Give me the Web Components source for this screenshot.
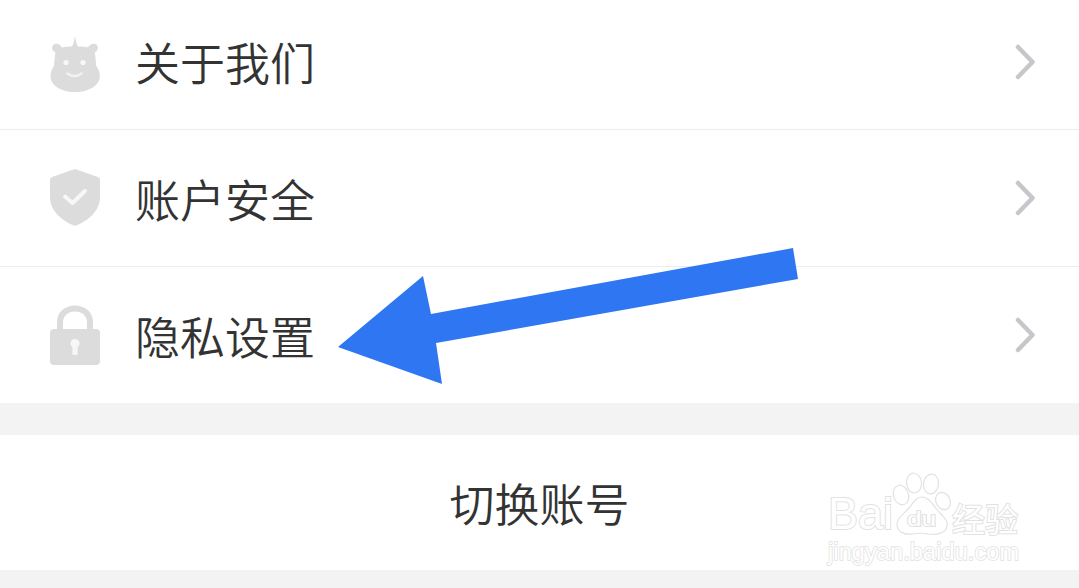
<!DOCTYPE html>
<html lang="zh">
<head>
<meta charset="utf-8">
<style>
  html, body { margin: 0; padding: 0; background: #f3f3f3; overflow: hidden; }
  body { font-family: "Noto Sans CJK SC", "Liberation Sans", sans-serif; }
</style>
</head>
<body>
<settings-page>
  <settings-group>
    <settings-row height="129" shift="7" divider label="关于我们">
      <svg slot="icon" width="52" height="60" viewBox="0 0 52 60">
        <path fill="#dcdcdc" d="M26 1 C26.8 6 27.6 9 29 11.5 C33 11.5 36 11.5 39 12.5 C41 8.5 46 7.5 48.2 10.5 C49.8 13 48.5 16 45.8 17.5 C46.6 22 46.8 27 47.2 31 C49.5 34 50.8 37.5 50.8 41 C50.8 51 39 57 26 57 C13 57 1.5 51 1.5 41 C1.5 37.5 2.8 34 5 31 C5.4 27 5.6 22 6.4 17.5 C3.6 16 2.3 13 3.8 10.5 C6 7.5 11 8.5 13 12.5 C16 11.5 19 11.5 23 11.5 C24.4 9 25.2 6 26 1 Z"/>
        <circle cx="17" cy="27.5" r="2.6" fill="#f7f7f7"/>
        <circle cx="34" cy="27.5" r="2.6" fill="#f7f7f7"/>
        <path fill="none" stroke="#f2f2f2" stroke-width="2.6" stroke-linecap="round" d="M18.5 38.5 Q25.5 43.5 32.5 38.5"/>
      </svg>
    </settings-row>
    <settings-row height="136" divider label="账户安全">
      <svg slot="icon" width="52" height="60" viewBox="0 0 52 60">
        <path fill="#dcdcdc" d="M26 1 L49 9 Q51 9.8 51 12 L51 29 C51 43 39 53 26 58 C13 53 1 43 1 29 L1 12 Q1 9.8 3 9 Z"/>
        <path fill="none" stroke="#f7f7f7" stroke-width="4" stroke-linecap="round" stroke-linejoin="round" d="M16 28.5 L23.5 35 L36 23"/>
      </svg>
    </settings-row>
    <settings-row height="136" label="隐私设置">
      <svg slot="icon" width="52" height="60" viewBox="0 0 52 60">
        <path fill="none" stroke="#dcdcdc" stroke-width="6" d="M11 27 L11 17.5 C11 9 17.5 3.5 26 3.5 C34.5 3.5 41 9 41 17.5 L41 27"/>
        <rect x="1" y="24" width="50" height="36" rx="4" fill="#dcdcdc"/>
        <path fill="#f7f7f7" d="M26 34 a4.4 4.4 0 0 1 2.6 8 L28.6 49 Q28.6 50 27.6 50 L24.4 50 Q23.4 50 23.4 49 L23.4 42 A4.4 4.4 0 0 1 26 34 Z"/>
      </svg>
    </settings-row>
  </settings-group>
  <settings-action label="切换账号"></settings-action>
</settings-page>
<pointer-arrow></pointer-arrow>
<baidu-mark></baidu-mark>

<script>
class SettingsPage extends HTMLElement {
  constructor() {
    super();
    this.attachShadow({ mode: 'open' });
    this.shadowRoot.innerHTML = `
      <style>
        :host {
          display: flex;
          flex-direction: column;
          gap: 32px;
          height: 588px;
          background: #f3f3f3;
        }
      </style>
      <slot></slot>
    `;
  }
}

class SettingsGroup extends HTMLElement {
  constructor() {
    super();
    this.attachShadow({ mode: 'open' });
    this.shadowRoot.innerHTML = `
      <style>
        :host { display: block; background: #fff; }
      </style>
      <slot></slot>
    `;
  }
}

class SettingsRow extends HTMLElement {
  constructor() {
    super();
    this.attachShadow({ mode: 'open' });
    this.shadowRoot.innerHTML = `
      <style>
        :host {
          display: flex;
          align-items: center;
          padding: 0 44px 0 49px;
          background: #fff;
        }
        :host([divider]) { border-bottom: 1px solid #ececec; }
        .icon { display: flex; width: 52px; height: 60px; margin-right: 34px; }
        .label {
          flex: 1;
          font-size: 45px;
          font-weight: 350;
          line-height: 60px;
          color: #333;
          margin-top: 2px;
          margin-bottom: var(--shift, 0);
        }
        svg.arrow { display: block; margin-bottom: 5px; }
        :host(:not([shift])) svg.arrow { margin-bottom: 0; }
      </style>
      <span class="icon"><slot name="icon"></slot></span>
      <span class="label"></span>
      <svg class="arrow" width="20" height="36" viewBox="0 0 20 36">
        <path fill="none" stroke="#c6c7cb" stroke-width="4.5" stroke-linecap="round" stroke-linejoin="round" d="M3 3 L17.5 18 L3 33"/>
      </svg>
    `;
    this.shadowRoot.querySelector('.label').textContent = this.getAttribute('label');
    this.style.height = this.getAttribute('height') + 'px';
    if (this.hasAttribute('shift')) this.style.setProperty('--shift', this.getAttribute('shift') + 'px');
  }
}

class SettingsAction extends HTMLElement {
  constructor() {
    super();
    this.attachShadow({ mode: 'open' });
    this.shadowRoot.innerHTML = `
      <style>
        :host {
          display: flex;
          align-items: center;
          justify-content: center;
          height: 135px;
          background: #fff;
          font-size: 45px;
          font-weight: 350;
          color: #333;
        }
      </style>
      <span></span>
    `;
    this.shadowRoot.querySelector('span').textContent = this.getAttribute('label');
  }
}

class PointerArrow extends HTMLElement {
  constructor() {
    super();
    this.attachShadow({ mode: 'open' });
    this.shadowRoot.innerHTML = `
      <style>
        :host { display: block; position: absolute; left: 0; top: 0; pointer-events: none; }
        svg { display: block; }
      </style>
      <svg width="1079" height="588" viewBox="0 0 1079 588">
        <polygon fill="#2f76f2" points="338,347 423,276 431,314 793,248 798,279 436,343 442,384"/>
      </svg>
    `;
  }
}

class BaiduMark extends HTMLElement {
  constructor() {
    super();
    this.attachShadow({ mode: 'open' });
    this.shadowRoot.innerHTML = `
      <style>
        :host {
          display: block;
          position: absolute;
          left: 828px;
          top: 472px;
          width: 200px;
          height: 92px;
          font-family: "Liberation Sans", sans-serif;
          color: #fff;
        }
        svg { position: absolute; left: 0; top: 0; }
        span {
          position: absolute;
          white-space: nowrap;
          color: #fff;
          -webkit-text-stroke: 2px #e2e2e2;
          paint-order: stroke fill;
        }
        .bai { left: 0; top: 19px; font-size: 45px; line-height: 46px; }
        .du { left: 79px; top: 35px; font-size: 21px; line-height: 24px; transform: scaleX(1.25); transform-origin: left; }
        .cn { left: 124px; top: 29px; font-size: 33px; line-height: 35px; font-family: "Noto Sans CJK SC", sans-serif; }
        .url { left: 0; top: 68px; font-size: 23.5px; line-height: 24px; letter-spacing: .1px; -webkit-text-stroke-width: 1.6px; }
      </style>
      <svg width="200" height="92" viewBox="0 0 200 92">
        <g fill="#fff" stroke="#e2e2e2" stroke-width="1.2">
          <ellipse cx="73" cy="23" rx="7.5" ry="10" transform="rotate(-18 73 23)"/>
          <ellipse cx="86" cy="11" rx="7.5" ry="10" transform="rotate(-6 86 11)"/>
          <ellipse cx="103" cy="12" rx="7.5" ry="10" transform="rotate(8 103 12)"/>
          <ellipse cx="115" cy="29" rx="7" ry="9" transform="rotate(-25 115 29)"/>
          <path d="M94 25 C102 25 105 34 112 41 C118 47 120 50 119 54 C118 62 108 63 100 62 C95 61 90 61 84 62 C76 63 69 60 69 52 C69 46 76 42 81 36 C85 31 88 25 94 25 Z"/>
        </g>
      </svg>
      <span class="bai">Bai</span>
      <span class="du">du</span>
      <span class="cn">经验</span>
      <span class="url">jingyan.baidu.com</span>
    `;
  }
}

customElements.define('settings-page', SettingsPage);
customElements.define('settings-group', SettingsGroup);
customElements.define('settings-row', SettingsRow);
customElements.define('settings-action', SettingsAction);
customElements.define('pointer-arrow', PointerArrow);
customElements.define('baidu-mark', BaiduMark);
</script>
</body>
</html>
